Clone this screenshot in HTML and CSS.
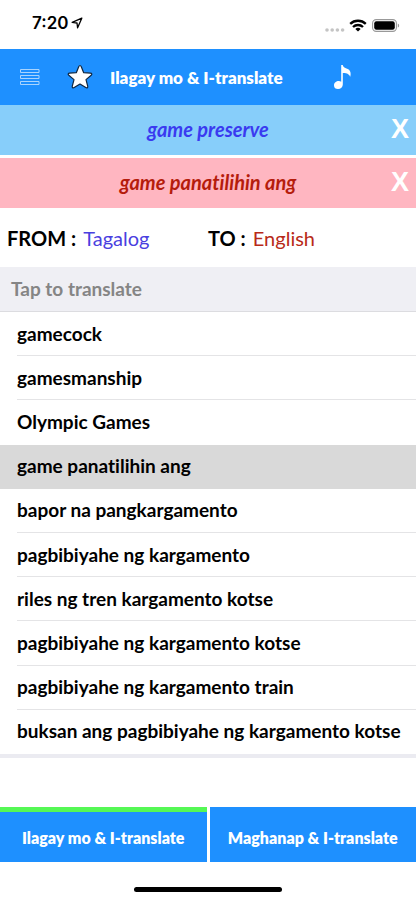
FILE: index.html
```html
<!DOCTYPE html>
<html lang="tl">
<head>
<meta charset="utf-8">
<meta name="viewport" content="width=device-width, initial-scale=1">
<title>Ilagay mo &amp; I-translate</title>
<link rel="stylesheet" href="styles.css">
</head>
<body>
<div class="status">
  <span class="time">7:20</span>
  <svg class="locate" width="12" height="12" viewBox="0 0 12 12" fill="none" stroke="#000" stroke-width="1.3" stroke-linejoin="round"><path d="M10.8 1.2 1.2 5.4 6 6 6.6 10.8Z"/></svg>
  <svg class="signal" width="20" height="4" viewBox="0 0 20 4" fill="#c4c4c4"><circle cx="2" cy="2" r="1.8"/><circle cx="7.2" cy="2" r="1.8"/><circle cx="12.4" cy="2" r="1.8"/><circle cx="17.6" cy="2" r="1.8"/></svg>
  <svg class="wifi" width="18" height="13" viewBox="0 0 18 13" fill="none" stroke="#000" stroke-width="2.3"><path d="M1.2 4.9a11.2 11.2 0 0 1 15.6 0"/><path d="M4 8a7.2 7.2 0 0 1 10 0"/><path d="M9 12.6 6.3 10a3.9 3.9 0 0 1 5.4 0Z" fill="#000" stroke="none"/></svg>
  <svg class="battery" width="28" height="13" viewBox="0 0 28 13"><rect x=".6" y=".6" width="23.8" height="11.8" rx="3.6" fill="none" stroke="#999" stroke-width="1.1"/><rect x="2.2" y="2.2" width="20.6" height="8.6" rx="2.2"/><path d="M25.8 4.4c1.8.6 1.8 3.6 0 4.2Z" fill="#999"/></svg>
</div>

<header class="nav">
  <button class="icon" aria-label="Menu"><svg width="20" height="18" viewBox="0 0 20 18" fill="none" stroke="#a8d4ff" stroke-width="1"><path d="M.5 1.5h18.500v3H.5zM.5 7.500h18.500v3H.5zM.5 13.500h18.500v3H.5z"/></svg></button>
  <button class="icon star" aria-label="Favorites"><svg width="26" height="26" viewBox="0 0 26 26" fill="#fff" stroke="#10263f" stroke-width="1.200" stroke-linejoin="round"><path d="M13 1.500c.7 0 1 .5 1.300 1.200l2.400 6 6.700.4c1.500.1 1.900 1.300.8 2.200l-5.200 4.300 1.700 6.500c.4 1.500-.6 2.200-1.900 1.400L13 20l-5.800 3.500c-1.300.8-2.300.1-1.900-1.400L7 15.600 1.800 11.300c-1.100-.9-.7-2.100.8-2.200l6.700-.4 2.400-6c.3-.7.6-1.200 1.300-1.200Z"/></svg></button>
  <h1>Ilagay mo &amp; I-translate</h1>
  <button class="icon note" aria-label="Sound"><svg width="18" height="26" viewBox="0 0 18 26" fill="#fff"><path d="M8.200 1h1.500c.5 2.600 2.400 3 5 4.100 3 1.300 3.500 4.500 2.400 7.900-.4-2.700-3.500-4.200-7.300-4v11.500c0 2.600-2 4.500-4.800 4.500C2.600 25 1 23.600 1 21.400c0-2.600 2.300-4.300 4.700-4.300 1 0 1.800.2 2.500.6Z"/></svg></button>
</header>

<main>
  <div class="band source">
    <input type="text" value="game preserve" aria-label="Tagalog">
    <button aria-label="Clear text">X</button>
  </div>
  <div class="band result">
    <input type="text" value="game panatilihin ang" aria-label="English" readonly>
    <button aria-label="Clear translation">X</button>
  </div>
  <div class="langs">
    <div><b>FROM :</b> <span class="from">Tagalog</span></div>
    <div><b>TO :</b> <span class="to">English</span></div>
  </div>
  <h2>Tap to translate</h2>
  <ul class="words">
    <li><button>gamecock</button></li>
    <li><button>gamesmanship</button></li>
    <li><button>Olympic Games</button></li>
    <li class="selected"><button>game panatilihin ang</button></li>
    <li><button>bapor na pangkargamento</button></li>
    <li><button>pagbibiyahe ng kargamento</button></li>
    <li><button>riles ng tren kargamento kotse</button></li>
    <li><button>pagbibiyahe ng kargamento kotse</button></li>
    <li><button>pagbibiyahe ng kargamento train</button></li>
    <li><button>buksan ang pagbibiyahe ng kargamento kotse</button></li>
  </ul>
</main>

<nav class="tabs">
  <a class="active" href="#input">Ilagay mo &amp; I-translate</a>
  <a href="#search">Maghanap &amp; I-translate</a>
</nav>
<div class="home"></div>
</body>
</html>
```

FILE: styles.css
```css
* { box-sizing: border-box; }
body {
  margin: 0;
  min-height: 100vh;
  display: flex;
  flex-direction: column;
  background: #fff;
  color: #000;
  font-family: Lato, "Open Sans", sans-serif;
  font-size: 19px;
  font-variant-ligatures: none;
}
button, input {
  margin: 0;
  padding: 0;
  border: 0;
  background: none;
  color: inherit;
  font: inherit;
  font-variant-ligatures: none;
}
svg { display: block; }

.status {
  height: 49px;
  padding: 0 16px 4px 32px;
  display: flex;
  align-items: center;
}
.time { font: 600 17px/20px Inter, sans-serif; }
.locate { margin-left: 3px; }
.signal { margin: 14px 4px 0 auto; }
.wifi { margin: 6px 5px 0 0; }
.battery { margin-top: 6px; }

.nav {
  height: 56px;
  padding: 0 65px 0 20px;
  display: flex;
  align-items: center;
  background: #1e90ff;
  color: #fff;
}
.nav h1 {
  margin: 0 0 0 17px;
  font-size: 17px;
  font-weight: 800;
  white-space: nowrap;
}
.star { margin-left: 27px; }
.note { margin-left: auto; }

main {
  flex: 1;
  display: flex;
  flex-direction: column;
}
.band {
  height: 50px;
  margin-bottom: 3px;
  position: relative;
}
.band input {
  width: 100%;
  height: 100%;
  padding-bottom: 2px;
  text-align: center;
  font-size: 20px;
  font-weight: 700;
  font-style: italic;
}
.band button {
  position: absolute;
  top: 0;
  right: 7px;
  height: 100%;
  padding-bottom: 2px;
  color: #fff;
  font: bold 27px/46px "Liberation Sans", sans-serif;
}
.source { background: #87cefa; color: #3a3af0; }
.result { margin-bottom: 0; background: #ffb6c1; color: #b51c0c; }

.langs {
  height: 59px;
  padding: 0 7px;
  display: grid;
  grid-template-columns: 1fr 1fr;
  align-items: center;
  font-size: 20px;
}
.langs b { font-weight: 700; }
.langs span { margin-left: 2px; }
.from { color: #4a40e0; }
.to { color: #b82a18; }

h2 {
  height: 45px;
  margin: 0;
  padding-left: 11px;
  border-bottom: 1px solid #dcdce0;
  background: #efeff4;
  color: #858585;
  font-size: 19px;
  font-weight: 700;
  line-height: 44px;
}
.words {
  flex: 1;
  margin: 0;
  padding: 0;
  display: flex;
  flex-direction: column;
  list-style: none;
  border-bottom: 4px solid #ebebf1;
}
.words li {
  flex: 1;
  min-height: 44px;
  padding-left: 17px;
  display: flex;
}
.words button {
  flex: 1;
  padding-bottom: 1px;
  border-bottom: 1px solid #e4e4e6;
  text-align: left;
  font-weight: 700;
  white-space: nowrap;
}
.words .selected { background: #d9d9d9; }
.words .selected button,
.words li:has(+ .selected) button,
.words li:last-child button { border-color: transparent; }

.tabs {
  margin-top: 49px;
  display: grid;
  grid-template-columns: 1fr 1fr;
  gap: 3px;
}
.tabs a {
  height: 55px;
  padding-top: 8px;
  background: #1e90ff;
  color: #fff;
  font-size: 16px;
  font-weight: 800;
  line-height: 46px;
  text-align: center;
  text-decoration: none;
}
.tabs .active {
  padding-top: 3px;
  border-top: 5px solid #55f855;
}
.home {
  width: 148px;
  height: 5px;
  margin: 25px auto 8px;
  border-radius: 3px;
  background: #000;
}
```
